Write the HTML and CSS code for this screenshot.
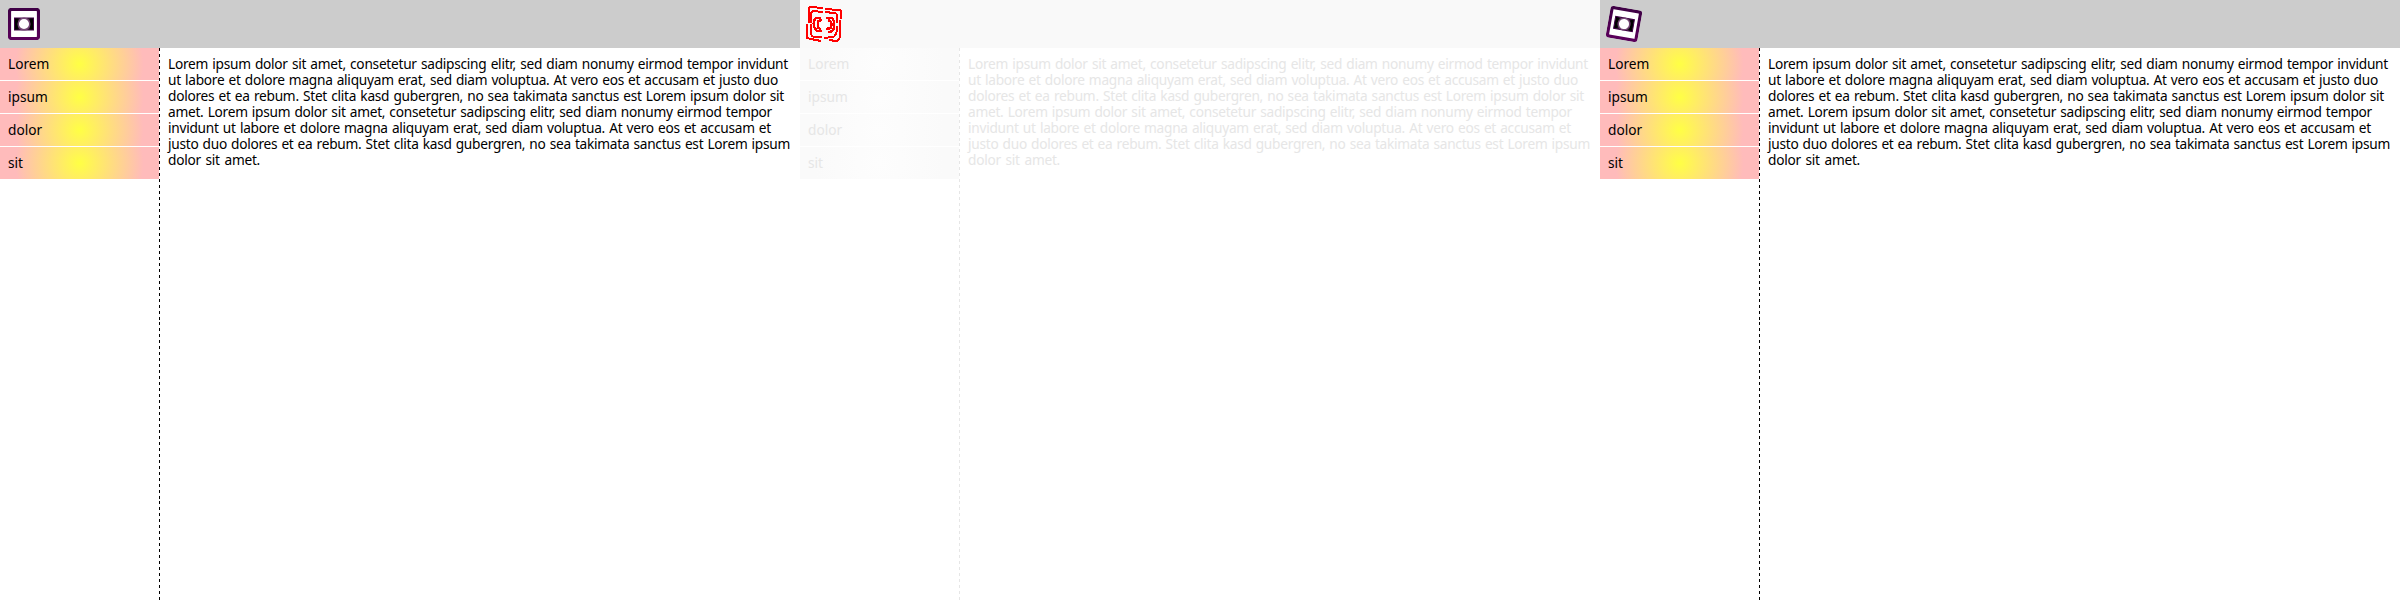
FILE: index.html
```
<!DOCTYPE html>
<html lang="en">
<head>
<meta charset="utf-8">
<title>Comparison</title>
<link rel="stylesheet" href="styles.css">
</head>
<body>
<svg class="defs" width="0" height="0" aria-hidden="true">
  <defs>
    <linearGradient id="frame" x1="0" y1="0" x2="0" y2="1"><stop offset="0" stop-color="#400046"/><stop offset="1" stop-color="#5a005a"/></linearGradient>
    <linearGradient id="bar" x1="0" y1="0" x2="1" y2="0"><stop offset="0" stop-color="#000"/><stop offset=".15" stop-color="#000"/><stop offset=".5" stop-color="#a070a0"/><stop offset=".85" stop-color="#000"/><stop offset="1" stop-color="#000"/></linearGradient>
    <symbol id="logo" viewBox="0 0 32 32">
      <rect x="1.5" y="1.5" width="29" height="29" rx="2" fill="#fff" stroke="url(#frame)" stroke-width="3.200"/>
      <rect x="6.5" y="10" width="19" height="12" fill="url(#bar)" stroke="#400046"/>
      <circle cx="16" cy="16" r="5.8" fill="#fff" stroke="#744474" stroke-width="1.5"/>
    </symbol>
  </defs>
</svg>
<main class="panels">
  <section class="panel">
    <header class="bar"><svg class="logo"><use href="#logo"/></svg></header>
    <div class="body">
      <nav class="menu"><a>Lorem</a><a>ipsum</a><a>dolor</a><a>sit</a></nav>
      <div class="divider"></div>
      <p class="copy"><span class="l1">Lorem ipsum dolor sit amet, consetetur sadipscing elitr, sed diam nonumy eirmod tempor invidunt</span><span class="l2">ut labore et dolore magna aliquyam erat, sed diam voluptua. At vero eos et accusam et justo duo</span><span class="l3">dolores et ea rebum. Stet clita kasd gubergren, no sea takimata sanctus est Lorem ipsum dolor sit</span><span class="l4">amet. Lorem ipsum dolor sit amet, consetetur sadipscing elitr, sed diam nonumy eirmod tempor</span><span class="l5">invidunt ut labore et dolore magna aliquyam erat, sed diam voluptua. At vero eos et accusam et</span><span class="l6">justo duo dolores et ea rebum. Stet clita kasd gubergren, no sea takimata sanctus est Lorem ipsum</span><span class="l7">dolor sit amet.</span></p>
    </div>
  </section>
  <section class="panel diff">
    <header class="bar"><svg class="difflogo" viewBox="0 0 36 36" shape-rendering="crispEdges">
      <g fill="none" stroke="#f00" stroke-width="2">
        <path d="M17 2 5 1 Q3 1 3 3V17M19 3 33 4Q35 4 35 6V13M34 14V31Q33 35 30 35L23 34M1 18V32L5 33 15 35M7 5 17 6M19 6 28 7Q31 7 31 10V17M5 18V28Q6 31 9 31L16 31M18 32 27 31Q31 30 31 20M5 17V9Q5 5 8 5"/>
        <path d="M15 12H10Q7 14 8 21L11 25H16M20 12H26Q29 15 28 22Q27 26 22 26M16 14 12 15V22L15 23M22 14Q27 15 25 22L20 23" stroke-width="2.500"/>
      </g><circle cx="18" cy="18.500" r="4.500" fill="#fff"/>
    </svg></header>
    <div class="body">
      <nav class="menu"><a>Lorem</a><a>ipsum</a><a>dolor</a><a>sit</a></nav>
      <div class="divider"></div>
      <p class="copy"><span class="l1">Lorem ipsum dolor sit amet, consetetur sadipscing elitr, sed diam nonumy eirmod tempor invidunt</span><span class="l2">ut labore et dolore magna aliquyam erat, sed diam voluptua. At vero eos et accusam et justo duo</span><span class="l3">dolores et ea rebum. Stet clita kasd gubergren, no sea takimata sanctus est Lorem ipsum dolor sit</span><span class="l4">amet. Lorem ipsum dolor sit amet, consetetur sadipscing elitr, sed diam nonumy eirmod tempor</span><span class="l5">invidunt ut labore et dolore magna aliquyam erat, sed diam voluptua. At vero eos et accusam et</span><span class="l6">justo duo dolores et ea rebum. Stet clita kasd gubergren, no sea takimata sanctus est Lorem ipsum</span><span class="l7">dolor sit amet.</span></p>
    </div>
  </section>
  <section class="panel">
    <header class="bar"><svg class="logo tilted"><use href="#logo"/></svg></header>
    <div class="body">
      <nav class="menu"><a>Lorem</a><a>ipsum</a><a>dolor</a><a>sit</a></nav>
      <div class="divider"></div>
      <p class="copy"><span class="l1">Lorem ipsum dolor sit amet, consetetur sadipscing elitr, sed diam nonumy eirmod tempor invidunt</span><span class="l2">ut labore et dolore magna aliquyam erat, sed diam voluptua. At vero eos et accusam et justo duo</span><span class="l3">dolores et ea rebum. Stet clita kasd gubergren, no sea takimata sanctus est Lorem ipsum dolor sit</span><span class="l4">amet. Lorem ipsum dolor sit amet, consetetur sadipscing elitr, sed diam nonumy eirmod tempor</span><span class="l5">invidunt ut labore et dolore magna aliquyam erat, sed diam voluptua. At vero eos et accusam et</span><span class="l6">justo duo dolores et ea rebum. Stet clita kasd gubergren, no sea takimata sanctus est Lorem ipsum</span><span class="l7">dolor sit amet.</span></p>
    </div>
  </section>
</main>
</body>
</html>
```
FILE: styles.css
```
body { margin: 0; background: #fff; color: #000; font: 13.7px/16px "Noto Sans", sans-serif; overflow: hidden; }
.defs { position: absolute; }
.panels { display: flex; height: 600px; }
.panel { width: 800px; display: flex; flex-direction: column; }
.bar { height: 48px; box-sizing: border-box; padding: 8px; background: #ccc; }
.logo { display: block; width: 32px; height: 32px; }
.tilted { transform: rotate(10deg); }
.body { flex: 1; display: flex; }
.menu { width: 159px; display: flex; flex-direction: column; gap: 1px; }
.menu a { height: 32px; box-sizing: border-box; padding: 8px; background: radial-gradient(circle, #ff4, #fbb 64px); }
.divider { width: 1px; color: #000; background: repeating-linear-gradient(currentColor 0 3px, transparent 3px 5.967px); }
.copy { margin: 0; padding: 8px; letter-spacing: -0.26px; }
.copy span { display: block; white-space: nowrap; text-align: justify; text-align-last: justify; }
.l1 { width: 620px; }
.l2 { width: 610px; }
.l3 { width: 616px; }
.l4 { width: 604px; }
.l5 { width: 603px; }
.l6 { width: 622px; }
.l7 { width: 92px; }
.diff { color: #e6e6e6; }
.diff .bar { background: #f9f9f9; padding: 6px; }
.diff .divider { color: #e6e6e6; }
.diff .menu a { background: radial-gradient(circle, #fdfdfd, #fafafa 64px); }
.difflogo { display: block; width: 36px; height: 36px; }
```
